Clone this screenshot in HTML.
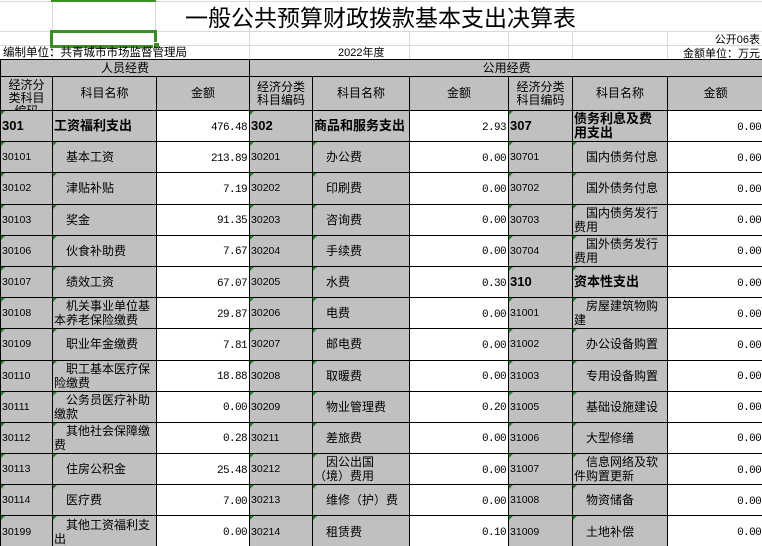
<!DOCTYPE html>
<html><head><meta charset="utf-8">
<style>
html,body{margin:0;padding:0;background:#fff;width:762px;height:546px;overflow:hidden;position:relative;font-family:"Liberation Sans","Noto Sans CJK SC",sans-serif;}
.gl{position:absolute;background:#d9d9d9;}
.t{position:absolute;white-space:nowrap;font-size:12px;line-height:13px;color:#000;}
table{position:absolute;left:0;top:59px;border-collapse:collapse;table-layout:fixed;width:763px;}
td{border:1px solid #000;padding:0;overflow:hidden;white-space:nowrap;position:relative;font-size:12px;line-height:14px;background:#c0c0c0;}
tr.d td{height:30.2px;}
.h1 td{height:15px;text-align:center;line-height:16px;}
.h2 td{height:33px;text-align:center;line-height:13px;}
.c{font-size:10.5px;padding-left:1px;text-align:left;}
.cb{font-size:13px;font-weight:bold;padding-left:1px;}
.n{text-indent:12px;padding-left:1px;text-align:left;}
.nb{font-weight:bold;font-size:13px;padding-left:1px;text-align:left;}
.a{background:#fff;text-align:right;padding-right:2px;padding-top:3px;font-family:"Liberation Mono",monospace;font-size:11px;letter-spacing:-0.6px;}
tr.d td.a{height:27.2px;}
.g::before{content:"";position:absolute;left:0;top:0;border-top:4px solid #1a8a1a;border-right:4px solid transparent;}
.clip{height:33px;overflow:hidden;display:flex;flex-direction:column;justify-content:center;}
</style></head><body>
<div class="gl" style="left:0;top:1px;width:762px;height:1px"></div>
<div class="gl" style="left:0;top:31px;width:762px;height:1px"></div>
<div class="gl" style="left:0;top:45px;width:762px;height:1px"></div>
<div class="gl" style="left:52px;top:0;width:1px;height:59px"></div>
<div class="gl" style="left:155px;top:0;width:1px;height:59px"></div>
<div class="gl" style="left:249px;top:0;width:1px;height:59px"></div>
<div class="gl" style="left:409px;top:31px;width:1px;height:28px"></div>
<div class="gl" style="left:508px;top:31px;width:1px;height:28px"></div>
<div class="gl" style="left:572px;top:31px;width:1px;height:28px"></div>
<div class="gl" style="left:667px;top:31px;width:1px;height:28px"></div>
<div style="position:absolute;left:51px;top:0;width:105px;height:2px;background:#3c8f22"></div>
<div style="position:absolute;left:50px;top:30px;width:101px;height:12px;border:3px solid #3c8f22"></div>
<div style="position:absolute;left:153px;top:42px;width:5px;height:5px;background:#3c8f22;border:1px solid #fff"></div>
<div class="t" style="left:185px;top:5px;font-size:23px;line-height:26px;letter-spacing:0px">一般公共预算财政拨款基本支出决算表</div>
<div style="position:absolute;left:0;top:46px;width:762px;height:13px;overflow:hidden">
<div class="t" style="left:3px;top:1px;font-size:11.5px">编制单位：共青城市市场监督管理局</div>
<div class="t" style="left:338px;top:1px;font-size:11px">2022年度</div>
<div class="t" style="right:2px;top:2px;font-size:11px">金额单位：万元</div>
</div>
<div class="t" style="right:2px;top:34px;font-size:11px">公开06表</div>
<table>
<colgroup><col style="width:52px"><col style="width:104px"><col style="width:93px"><col style="width:63px"><col style="width:97px"><col style="width:99px"><col style="width:64px"><col style="width:95px"><col style="width:96px"></colgroup>
<tr class="h1"><td colspan="3" style="border-right:1px solid #000">人员经费</td><td colspan="6">公用经费</td></tr>
<tr class="h2"><td><div class="clip" style="justify-content:flex-start;padding-top:2px;height:31px">经济分<br>类科目<br>编码</div></td><td>科目名称</td><td>金额</td><td>经济分类<br>科目编码</td><td>科目名称</td><td>金额</td><td>经济分类<br>科目编码</td><td>科目名称</td><td>金额</td></tr>
<tr class="d"><td class="cb g">301</td><td class="nb">工资福利支出</td><td class="a">476.48</td><td class="cb g">302</td><td class="nb">商品和服务支出</td><td class="a">2.93</td><td class="cb g">307</td><td class="nb">债务利息及费<br>用支出</td><td class="a">0.00</td></tr>
<tr class="d"><td class="c g">30101</td><td class="n g">基本工资</td><td class="a">213.89</td><td class="c g">30201</td><td class="n g">办公费</td><td class="a">0.00</td><td class="c g">30701</td><td class="n g">国内债务付息</td><td class="a">0.00</td></tr>
<tr class="d"><td class="c g">30102</td><td class="n g">津贴补贴</td><td class="a">7.19</td><td class="c g">30202</td><td class="n g">印刷费</td><td class="a">0.00</td><td class="c g">30702</td><td class="n g">国外债务付息</td><td class="a">0.00</td></tr>
<tr class="d"><td class="c g">30103</td><td class="n g">奖金</td><td class="a">91.35</td><td class="c g">30203</td><td class="n g">咨询费</td><td class="a">0.00</td><td class="c g">30703</td><td class="n g">国内债务发行<br>费用</td><td class="a">0.00</td></tr>
<tr class="d"><td class="c g">30106</td><td class="n g">伙食补助费</td><td class="a">7.67</td><td class="c g">30204</td><td class="n g">手续费</td><td class="a">0.00</td><td class="c g">30704</td><td class="n g">国外债务发行<br>费用</td><td class="a">0.00</td></tr>
<tr class="d"><td class="c g">30107</td><td class="n g">绩效工资</td><td class="a">67.07</td><td class="c g">30205</td><td class="n g">水费</td><td class="a">0.30</td><td class="cb g">310</td><td class="nb g">资本性支出</td><td class="a">0.00</td></tr>
<tr class="d"><td class="c g">30108</td><td class="n g">机关事业单位基<br>本养老保险缴费</td><td class="a">29.87</td><td class="c g">30206</td><td class="n g">电费</td><td class="a">0.00</td><td class="c g">31001</td><td class="n g">房屋建筑物购<br>建</td><td class="a">0.00</td></tr>
<tr class="d"><td class="c g">30109</td><td class="n g">职业年金缴费</td><td class="a">7.81</td><td class="c g">30207</td><td class="n g">邮电费</td><td class="a">0.00</td><td class="c g">31002</td><td class="n g">办公设备购置</td><td class="a">0.00</td></tr>
<tr class="d"><td class="c g">30110</td><td class="n g">职工基本医疗保<br>险缴费</td><td class="a">18.88</td><td class="c g">30208</td><td class="n g">取暖费</td><td class="a">0.00</td><td class="c g">31003</td><td class="n g">专用设备购置</td><td class="a">0.00</td></tr>
<tr class="d"><td class="c g">30111</td><td class="n g">公务员医疗补助<br>缴款</td><td class="a">0.00</td><td class="c g">30209</td><td class="n g">物业管理费</td><td class="a">0.20</td><td class="c g">31005</td><td class="n g">基础设施建设</td><td class="a">0.00</td></tr>
<tr class="d"><td class="c g">30112</td><td class="n g">其他社会保障缴<br>费</td><td class="a">0.28</td><td class="c g">30211</td><td class="n g">差旅费</td><td class="a">0.00</td><td class="c g">31006</td><td class="n g">大型修缮</td><td class="a">0.00</td></tr>
<tr class="d"><td class="c g">30113</td><td class="n g">住房公积金</td><td class="a">25.48</td><td class="c g">30212</td><td class="n g">因公出国<br>（境）费用</td><td class="a">0.00</td><td class="c g">31007</td><td class="n g">信息网络及软<br>件购置更新</td><td class="a">0.00</td></tr>
<tr class="d"><td class="c g">30114</td><td class="n g">医疗费</td><td class="a">7.00</td><td class="c g">30213</td><td class="n g">维修（护）费</td><td class="a">0.00</td><td class="c g">31008</td><td class="n g">物资储备</td><td class="a">0.00</td></tr>
<tr class="d"><td class="c g">30199</td><td class="n g">其他工资福利支<br>出</td><td class="a">0.00</td><td class="c g">30214</td><td class="n g">租赁费</td><td class="a">0.10</td><td class="c g">31009</td><td class="n g">土地补偿</td><td class="a">0.00</td></tr>
</table>
</body></html>
